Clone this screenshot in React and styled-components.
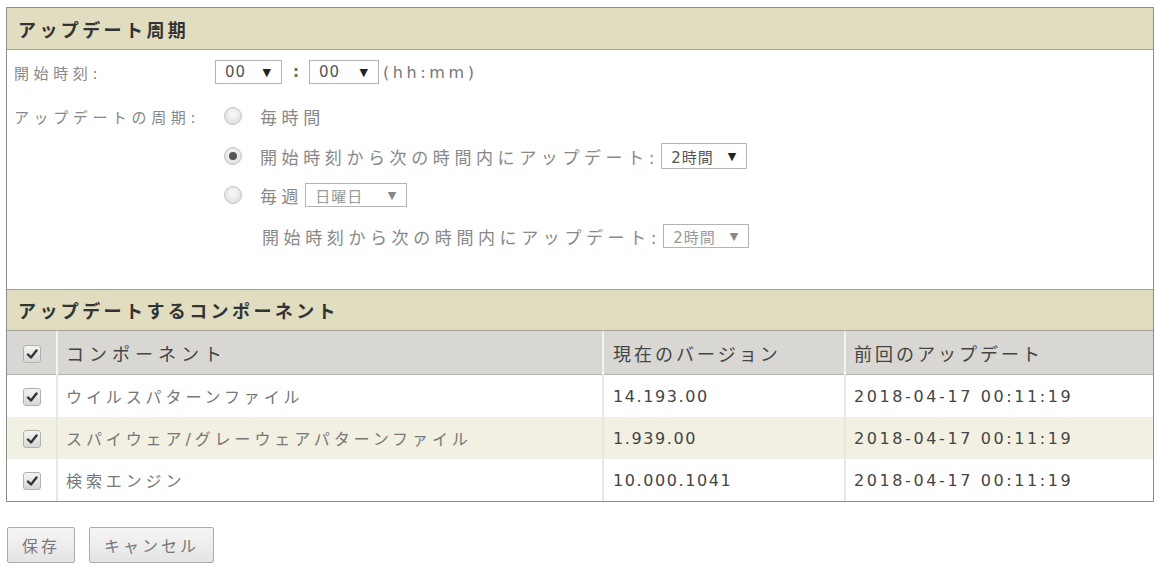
import React from "react";
import styled, { createGlobalStyle, css } from "styled-components";

const GlobalStyle = createGlobalStyle`
  body {
    margin: 0;
    background: #fff;
    font-family: "DejaVu Sans", "Noto Sans CJK JP", sans-serif;
    color: #666;
  }
`;

const Page = styled.div`
  padding: 7px 3px 0 6px;
`;

const Panel = styled.div`
  border: 1px solid #8c8c8c;
  width: 1146px;
`;

const SectionHeader = styled.div`
  height: 42px;
  box-sizing: border-box;
  display: flex;
  align-items: center;
  padding-left: 11px;
  background: #e1ddc1;
  border-bottom: 1px solid #a3a293;
  border-top: ${(p) => (p.$top ? "1px solid #a3a293" : "none")};
  font-size: 18px;
  font-weight: bold;
  letter-spacing: 3.4px;
  color: #333;
`;

const Form = styled.div`
  padding: 10px 7px 31px;
  display: flex;
  flex-direction: column;
`;

const Row = styled.div`
  display: grid;
  grid-template-columns: 201px 1fr;
  align-items: center;
  height: ${(p) => p.$h}px;
  margin-top: ${(p) => p.$mt || 0}px;
`;

const Label = styled.div`
  font-size: 15px;
  letter-spacing: 4.6px;
  color: #888;
`;

const Controls = styled.div`
  display: flex;
  align-items: center;
  padding-left: ${(p) => p.$indent || 0}px;
`;

const Select = styled.div`
  box-sizing: border-box;
  width: ${(p) => p.$w}px;
  height: ${(p) => p.$hgt || 24}px;
  border: 1px solid #b4b4b4;
  background: #fff;
  display: flex;
  align-items: center;
  justify-content: space-between;
  padding: 0 9px 0 9px;
  font-size: 15px;
  letter-spacing: 1px;
  color: ${(p) => (p.$disabled ? "#999" : "#555")};
  margin-left: ${(p) => p.$ml || 0}px;

  span:last-child {
    font-size: 11px;
    color: ${(p) => (p.$disabled ? "#888" : "#222")};
  }
`;

const Colon = styled.span`
  font-size: 15px;
  font-weight: bold;
  color: #666;
  margin: 0 10px 0 11px;
`;

const Hint = styled.span`
  font-size: 16px;
  letter-spacing: 3.6px;
  color: #777;
  margin-left: 4px;
`;

const Radio = styled.span`
  width: 18px;
  height: 18px;
  border-radius: 50%;
  box-sizing: border-box;
  border: 1px solid #c4c4c4;
  background: radial-gradient(circle at 50% 40%, #fafafa 0%, #e2e2e2 70%, #d0d0d0 100%);
  margin-left: 9px;
  margin-right: 18px;
  display: inline-flex;
  align-items: center;
  justify-content: center;
  flex-shrink: 0;

  ${(p) =>
    p.$checked &&
    css`
      &::after {
        content: "";
        width: 8px;
        height: 8px;
        border-radius: 50%;
        background: #555;
      }
    `}
`;

const OptionText = styled.span`
  font-size: 17px;
  letter-spacing: 4.6px;
  color: #888;
`;

const Table = styled.table`
  width: 100%;
  border-collapse: collapse;
  table-layout: fixed;
`;

const Th = styled.th`
  height: 43px;
  background: #d9d7d3;
  border-bottom: 1px solid #b8b6b0;
  border-left: ${(p) => (p.$first ? "none" : "2px solid #f4f4f2")};
  text-align: ${(p) => (p.$center ? "center" : "left")};
  padding: 0 0 0 ${(p) => (p.$center ? 0 : p.$pl || 8)}px;
  font-size: 18px;
  font-weight: normal;
  letter-spacing: ${(p) => p.$ls || 3}px;
  color: #444;
`;

const Tr = styled.tr`
  background: ${(p) => (p.$alt ? "#f1f0e2" : "#fff")};
`;

const Td = styled.td`
  height: 42px;
  border-left: ${(p) => (p.$first ? "none" : "2px solid #e6e6e4")};
  text-align: ${(p) => (p.$center ? "center" : "left")};
  padding: 0 0 0 ${(p) => (p.$center ? 0 : p.$pl || 8)}px;
  font-size: 16px;
  letter-spacing: ${(p) => p.$ls || 3.9}px;
  color: ${(p) => (p.$num ? "#444" : "#777")};
`;

const Check = styled.span`
  display: inline-flex;
  align-items: center;
  justify-content: center;
  width: 18px;
  height: 18px;
  box-sizing: border-box;
  border: 1px solid #b0b0b0;
  border-radius: 3px;
  background: linear-gradient(#f4f4f4, #d6d6d6);
  vertical-align: middle;

  svg {
    width: 12px;
    height: 12px;
  }
`;

const Buttons = styled.div`
  display: flex;
  gap: 14px;
  margin: 25px 0 0 1px;
`;

const Button = styled.button`
  height: 36px;
  padding: 0 14px;
  border: 1px solid #ababab;
  border-radius: 2px;
  background: linear-gradient(#f6f6f6, #e4e4e4);
  font-family: inherit;
  font-size: 16px;
  letter-spacing: 3px;
  color: #777;
`;

const CheckBox = () => (
  <Check>
    <svg viewBox="0 0 12 12">
      <path d="M2 6.5 L5 9.5 L10.5 2.5" fill="none" stroke="#333" strokeWidth="2.4" strokeLinecap="round" strokeLinejoin="round" />
    </svg>
  </Check>
);

const Dropdown = ({ value, ...rest }) => (
  <Select {...rest}>
    <span>{value}</span>
    <span>▼</span>
  </Select>
);

const rows = [
  { name: "ウイルスパターンファイル", ver: "14.193.00", date: "2018-04-17 00:11:19" },
  { name: "スパイウェア/グレーウェアパターンファイル", ver: "1.939.00", date: "2018-04-17 00:11:19" },
  { name: "検索エンジン", ver: "10.000.1041", date: "2018-04-17 00:11:19" },
];

export default function App() {
  return (
    <Page>
      <GlobalStyle />
      <Panel>
        <SectionHeader>アップデート周期</SectionHeader>
        <Form>
          <Row $h={24}>
            <Label>開始時刻:</Label>
            <Controls>
              <Dropdown value="00" $w={67} />
              <Colon>:</Colon>
              <Dropdown value="00" $w={70} />
              <Hint>(hh:mm)</Hint>
            </Controls>
          </Row>
          <Row $h={40} $mt={12}>
            <Label>アップデートの周期:</Label>
            <Controls>
              <Radio />
              <OptionText>毎時間</OptionText>
            </Controls>
          </Row>
          <Row $h={40}>
            <span />
            <Controls>
              <Radio $checked />
              <OptionText>開始時刻から次の時間内にアップデート:</OptionText>
              <Dropdown value="2時間" $w={86} $hgt={26} $ml={2} />
            </Controls>
          </Row>
          <Row $h={38}>
            <span />
            <Controls>
              <Radio />
              <OptionText>毎週</OptionText>
              <Dropdown value="日曜日" $w={102} $ml={2} $disabled />
            </Controls>
          </Row>
          <Row $h={44}>
            <span />
            <Controls $indent={47}>
              <OptionText>開始時刻から次の時間内にアップデート:</OptionText>
              <Dropdown value="2時間" $w={86} $ml={2} $disabled />
            </Controls>
          </Row>
        </Form>
        <SectionHeader $top>アップデートするコンポーネント</SectionHeader>
        <Table>
          <colgroup>
            <col style={{ width: 50 }} />
            <col style={{ width: 546 }} />
            <col style={{ width: 242 }} />
            <col />
          </colgroup>
          <thead>
            <tr>
              <Th $first $center>
                <CheckBox />
              </Th>
              <Th $ls={5}>コンポーネント</Th>
              <Th $pl={9}>現在のバージョン</Th>
              <Th>前回のアップデート</Th>
            </tr>
          </thead>
          <tbody>
            {rows.map((r, i) => (
              <Tr key={r.name} $alt={i % 2 === 1}>
                <Td $first $center>
                  <CheckBox />
                </Td>
                <Td>{r.name}</Td>
                <Td $num $pl={9} $ls={1.6}>{r.ver}</Td>
                <Td $num $ls={2.6}>{r.date}</Td>
              </Tr>
            ))}
          </tbody>
        </Table>
      </Panel>
      <Buttons>
        <Button>保存</Button>
        <Button>キャンセル</Button>
      </Buttons>
    </Page>
  );
}
